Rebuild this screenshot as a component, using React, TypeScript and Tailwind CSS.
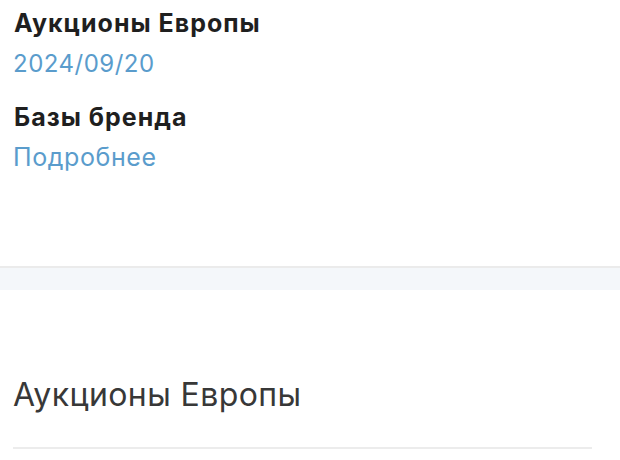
export default function App() {
  return (
    <div className="w-[620px] h-[460px] bg-white overflow-hidden font-['Inter',sans-serif]">
      <div className="h-[266px] pl-[14px] pr-[13px] pt-[8px]">
        <div className="text-[25px] leading-[30px] font-bold tracking-[1px] text-[#1f1f1f]">Аукционы Европы</div>
        <div className="mt-[11px] -ml-px text-[24px] leading-[30px] tracking-[0.5px] text-[#5a9ccc]">2024/09/20</div>
        <div className="mt-[23px] text-[25px] leading-[30px] font-bold tracking-[1px] text-[#1f1f1f]">Базы бренда</div>
        <div className="mt-[10px] -ml-px text-[25px] leading-[30px] tracking-[0.6px] text-[#5a9ccc]">Подробнее</div>
      </div>
      <div className="h-[24px] bg-[#f4f7fa] border-t-2 border-[#ebebeb]" />
      <div className="pl-[13px] pr-[28px] pt-[84px]">
        <div className="text-[32px] leading-[42px] tracking-[0.4px] text-[#383838]">Аукционы Европы</div>
        <div className="mt-[31px] h-[2px] bg-[#ececec]" />
      </div>
    </div>
  );
}
